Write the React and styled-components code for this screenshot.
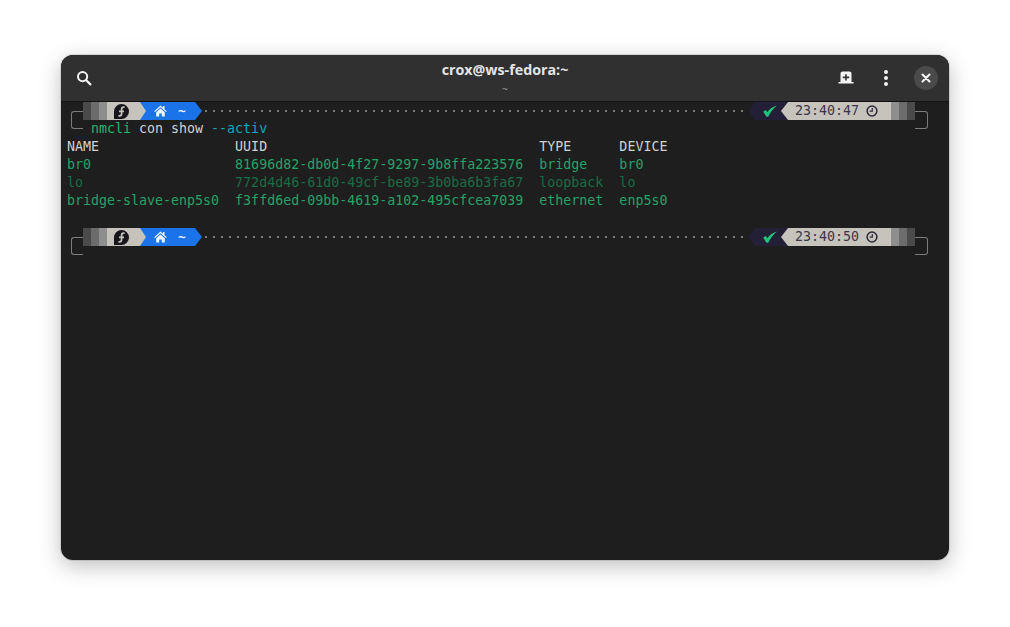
import React from "react";
import styled, { createGlobalStyle } from "styled-components";

const Global = createGlobalStyle`
  html, body { margin: 0; padding: 0; background: #fff; }
  #root { width: 1010px; height: 627px; overflow: hidden; }
`;

const Page = styled.div`
  width: 1010px;
  height: 627px;
  padding: 55px 61px 67px;
  box-sizing: border-box;
  background: #fff;
`;

const Win = styled.div`
  width: 888px;
  height: 505px;
  display: flex;
  flex-direction: column;
  background: #1e1e1e;
  border-radius: 12px;
  overflow: hidden;
  box-shadow: 0 0 0 1px rgba(0,0,0,0.1), 0 6px 22px rgba(0,0,0,0.26);
`;

const Header = styled.header`
  height: 46px;
  flex: none;
  display: grid;
  grid-template-columns: 1fr auto 1fr;
  align-items: start;
  background: #303030;
  border-bottom: 1px solid #141414;
  box-sizing: content-box;
  font-family: "Open Sans", "Noto Sans", sans-serif;
`;

const Left = styled.div`
  display: flex;
  padding: 15px 0 0 15px;
`;

const Right = styled.div`
  display: flex;
  justify-content: flex-end;
  align-items: center;
  padding: 11px 11px 0 0;
`;

const TitleBox = styled.div`
  display: flex;
  flex-direction: column;
  align-items: center;
  padding-top: 6px;
`;

const Title = styled.div`
  color: #e4e4e4;
  font-size: 14.25px;
  font-weight: 700;
  line-height: 18px;
`;

const Sub = styled.div`
  color: #9a9a9a;
  font-size: 10.5px;
  line-height: 14px;
  margin-top: 3px;
`;

const IconSlot = styled.div`
  width: ${p => p.$w}px;
  height: 24px;
  display: flex;
  align-items: center;
  justify-content: center;
`;

const CloseBtn = styled.div`
  width: 24px;
  height: 24px;
  border-radius: 50%;
  background: #4a4a4a;
  display: flex;
  align-items: center;
  justify-content: center;
`;

const Term = styled.main`
  flex: 1;
  padding: 0 0 0 6px;
  font-family: "DejaVu Sans Mono", monospace;
  font-size: 13.3px;
  line-height: 18px;
  color: #d0d0d0;
  white-space: pre;
`;

const Line = styled.div`
  height: 18px;
  color: ${p => p.$c || "inherit"};
`;

const CmdLine = styled(Line)`
  padding-left: 24px;
`;

const Span = styled.span`
  color: ${p => p.$c};
`;

const PromptRow = styled.div`
  height: 18px;
  width: 861px;
  display: flex;
  align-items: stretch;
`;

const BracketL = styled.div`
  width: 12px;
  height: 18px;
  margin: 9px 0 0 4px;
  flex: none;
  box-sizing: border-box;
  border: 1px solid #7c7c7c;
  border-right: none;
  border-radius: 3px 0 0 3px;
`;

const BracketR = styled(BracketL)`
  width: 13px;
  margin: 9px 0 0 0;
  border: 1px solid #7c7c7c;
  border-left: none;
  border-radius: 0 3px 3px 0;
`;

const Shade = styled.div`
  width: 8px;
  flex: none;
  background: ${p => p.$c};
`;

const FedSeg = styled.div`
  width: 39px;
  margin-right: -6px;
  flex: none;
  position: relative;
  z-index: 2;
  display: flex;
  align-items: center;
  padding-left: 7px;
  box-sizing: border-box;
  background: #c6c3bc;
  clip-path: polygon(0 0, 33px 0, 39px 50%, 33px 100%, 0 100%);
`;

const HomeSeg = styled.div`
  width: 62px;
  flex: none;
  display: flex;
  align-items: center;
  box-sizing: border-box;
  padding-left: 14px;
  background: #1a73e8;
  color: #eef4ff;
  font-weight: 700;
  clip-path: polygon(0 0, 55px 0, 62px 50%, 55px 100%, 0 100%);
`;

const Tilde = styled.span`
  margin-left: 11px;
  font-size: 13px;
`;

const Dots = styled.div`
  flex: 1;
  margin: 0 2px 0 3px;
  display: flex;
  align-items: center;
`;

const DotsFill = styled.div`
  width: 100%;
  height: 2px;
  background-image: radial-gradient(circle at 1px 1px, #7d7d7d 0.9px, transparent 1.1px);
  background-size: 8px 2px;
`;

const StatusSeg = styled.div`
  width: 38px;
  margin-right: -6px;
  flex: none;
  display: flex;
  align-items: center;
  justify-content: center;
  padding-left: 4px;
  box-sizing: border-box;
  background: #231f36;
  clip-path: polygon(6px 0, 100% 0, 100% 100%, 6px 100%, 0 50%);
`;

const TimeSeg = styled.div`
  width: 110px;
  flex: none;
  position: relative;
  z-index: 2;
  display: flex;
  align-items: center;
  padding-left: 14px;
  gap: 7px;
  box-sizing: border-box;
  background: #c6c3bc;
  color: #3a3848;
  clip-path: polygon(7px 0, 100% 0, 100% 100%, 7px 100%, 0 50%);
`;

const SearchIcon = () => (
  <svg width="16" height="16" viewBox="0 0 16 16" fill="none">
    <circle cx="6.6" cy="6.6" r="4.6" stroke="#f2f2f2" strokeWidth="2" />
    <path d="M10 10l4.4 4.4" stroke="#f2f2f2" strokeWidth="2.2" strokeLinecap="round" />
  </svg>
);

const NewTabIcon = () => (
  <svg width="16" height="14" viewBox="0 0 16 14">
    <path fillRule="evenodd" fill="#f4f4f4" d="M2.5 2.5a2 2 0 0 1 2-2h7a2 2 0 0 1 2 2V11H15.5v1.5H.5V11h2zM7.2 3.2v2.4H4.8v1.6h2.4v2.4h1.6V7.2h2.4V5.6H8.8V3.2z" />
  </svg>
);

const MenuIcon = () => (
  <svg width="4" height="16" viewBox="0 0 4 16" fill="#f2f2f2">
    <circle cx="2" cy="2" r="2" />
    <circle cx="2" cy="8" r="2" />
    <circle cx="2" cy="14" r="2" />
  </svg>
);

const CloseIcon = () => (
  <svg width="10" height="10" viewBox="0 0 10 10">
    <path d="M1.5 1.5l7 7M8.5 1.5l-7 7" stroke="#f4f4f4" strokeWidth="2.1" strokeLinecap="round" />
  </svg>
);

const FedoraIcon = () => (
  <svg width="15" height="15" viewBox="0 0 15 15">
    <path fill="#17161c" d="M7.5 0a7.5 7.5 0 0 1 0 15H0V7.5A7.5 7.5 0 0 1 7.5 0z" />
    <path fill="none" stroke="#c6c3bc" strokeWidth="1.7" d="M10.6 3.2H9.6A2 2 0 0 0 7.6 5.2V9.8A2 2 0 0 1 5.6 11.8H4.4M5 7.4H10" />
  </svg>
);

const HomeIcon = () => (
  <svg width="13" height="12" viewBox="0 0 13 12" fill="#eef4ff">
    <path d="M6.5.6L.2 6.2l.8.9L6.5 2.3l5.5 4.8.8-.9-2.3-2V1h-1.6v1.8z" />
    <path d="M2.2 7.2L6.5 3.4l4.3 3.8V11.6H7.8V8.4H5.2v3.2H2.2z" />
  </svg>
);

const CheckIcon = () => (
  <svg width="14" height="12" viewBox="0 0 14 12">
    <path fill="#20c37a" d="M.2 6.4L3 5l1.4 2.2C6 4.6 9.4 1.6 13.8.4 10.2 3.4 7.2 7.4 5.2 11.8H3.4z" />
  </svg>
);

const ClockIcon = () => (
  <svg width="12" height="12" viewBox="0 0 12 12" fill="none">
    <circle cx="6" cy="6" r="4.9" stroke="#2c2a3a" strokeWidth="1.5" />
    <path d="M6.3 3v3.2H3.6" stroke="#2c2a3a" strokeWidth="1.2" />
  </svg>
);

const Prompt = ({ time }) => (
  <PromptRow>
    <BracketL />
    <Shade $c="#4a4a4a" />
    <Shade $c="#6c6c6c" />
    <Shade $c="#8e8e8e" />
    <FedSeg><FedoraIcon /></FedSeg>
    <HomeSeg><HomeIcon /><Tilde>~</Tilde></HomeSeg>
    <Dots><DotsFill /></Dots>
    <StatusSeg><CheckIcon /></StatusSeg>
    <TimeSeg>{time}<ClockIcon /></TimeSeg>
    <Shade $c="#8e8e8e" />
    <Shade $c="#6c6c6c" />
    <Shade $c="#4a4a4a" />
    <BracketR />
  </PromptRow>
);

const G = "#26a269";
const D = "#1c6b46";

export default function App() {
  return (
    <Page>
      <Global />
      <Win>
        <Header>
          <Left><SearchIcon /></Left>
          <TitleBox>
            <Title>crox@ws-fedora:~</Title>
            <Sub>~</Sub>
          </TitleBox>
          <Right>
            <IconSlot $w={24}><NewTabIcon /></IconSlot>
            <IconSlot $w={56}><MenuIcon /></IconSlot>
            <CloseBtn><CloseIcon /></CloseBtn>
          </Right>
        </Header>
        <Term>
          <Prompt time="23:40:47" />
          <CmdLine><Span $c="#26b36f">nmcli</Span> con show <Span $c="#0fa6bf">--activ</Span></CmdLine>
          <Line>{"NAME                 UUID                                  TYPE      DEVICE"}</Line>
          <Line $c={G}>{"br0                  81696d82-db0d-4f27-9297-9b8ffa223576  bridge    br0"}</Line>
          <Line $c={D}>{"lo                   772d4d46-61d0-49cf-be89-3b0ba6b3fa67  loopback  lo"}</Line>
          <Line $c={G}>{"bridge-slave-enp5s0  f3ffd6ed-09bb-4619-a102-495cfcea7039  ethernet  enp5s0"}</Line>
          <Line />
          <Prompt time="23:40:50" />
        </Term>
      </Win>
    </Page>
  );
}
